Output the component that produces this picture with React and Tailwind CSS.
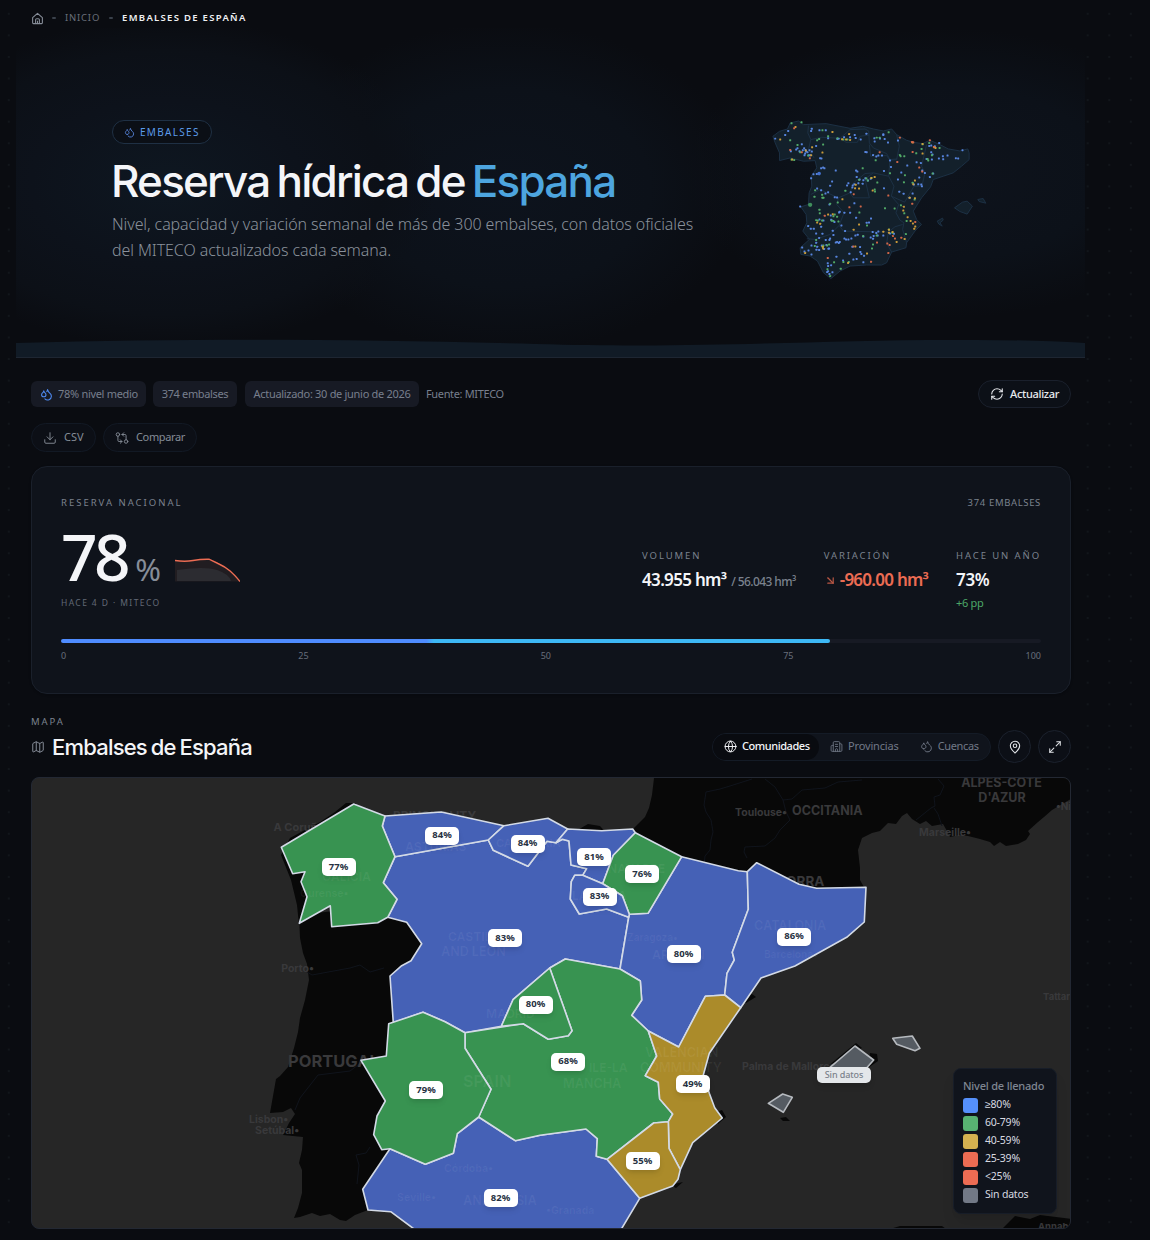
import { ArrowDownRight, Building2, Download, Droplets, GitCompareArrows, Globe, Map, MapPin, Maximize2, RefreshCw } from 'lucide-react';

const fills = { blue: '#4561b6', green: '#389351', yellow: '#ab8b2a' };

// Simplified outlines of the autonomous communities, in map canvas units
const regions = [
  { id: 'andalucia', tone: 'blue', points: '390,1148.7 425.3,1164.3 453.3,1153.3 457.3,1133.7 478.7,1117 515.3,1140.7 540,1135.3 586,1129 597.3,1138.7 596.3,1156.3 607,1159.3 639.7,1198.3 622,1228 614,1241 430,1241 412.3,1227.7 390.7,1211.7 368,1210 362.7,1189.3' },
  { id: 'castilla-leon', tone: 'blue', points: '395,856.7 488.3,840 493.3,850.3 528,866.3 547,841.3 556,842.7 562.3,839.3 569,841 571,865 586.7,868.7 582.7,875.3 574.7,875.3 571.3,881.7 570.3,899 579.3,914 606.7,909 628.7,917.3 620,969 565.3,959 549.7,968 513,999.7 501.3,1026.3 465,1032.7 445,1021.7 423,1012.3 393.3,1022.7 390,976 401.7,965.7 411,960.7 421.7,943.7 406.7,922.3 387.7,917.3 397,899.3 383.3,882.7' },
  { id: 'asturias', tone: 'blue', points: '385,816 441.3,812 504,825.7 488.3,840 395,856.7 382.3,826' },
  { id: 'cantabria', tone: 'blue', points: '504,825.7 548,818.3 567.7,829 556,842.7 547,841.3 528,866.3 493.3,850.3 488.3,840' },
  { id: 'euskadi', tone: 'blue', points: '567.7,829 601.7,830.7 632.7,829 635.3,832.7 613.3,855.3 602.7,883.7 582.7,875.3 586.7,868.7 571,865 569,841 562.3,839.3 556,842.7' },
  { id: 'aragon', tone: 'blue', points: '681.7,856.7 738.3,870.7 747.3,871.7 748.3,909.3 732.3,952.3 734.3,960 727,973.3 724.7,995 705.3,996.3 678.7,1047 648.3,1031 631.7,1015.3 641.7,1000 640.3,981 620,969 628.7,917.3 629.3,914.3 648,913.3' },
  { id: 'cataluna', tone: 'blue', points: '747.3,871.7 756.7,862.7 799,884.3 816.7,888.3 866,887.3 864.3,922 846.7,937.3 795,966 761,978 740.7,1007.7 724.7,995 727,973.3 734.3,960 732.3,952.3 748.3,909.3' },
  { id: 'galicia', tone: 'green', points: '353.7,804 385,816 382.3,826 395,856.7 383.3,882.7 397,899.3 387.7,917.3 377.7,922.7 331.7,926.7 330.3,905.7 299.3,923.3 307,896.7 301,881.7 305,871.7 292.7,873.7 281.3,847.3' },
  { id: 'navarra', tone: 'green', points: '635.3,832.7 681.7,856.7 648,913.3 629.3,914.3 622.3,895.7 602.7,883.7 613.3,855.3' },
  { id: 'rioja', tone: 'blue', points: '582.7,875.3 602.7,883.7 622.3,895.7 629.3,914.3 628.7,917.3 606.7,909 579.3,914 570.3,899 571.3,881.7 574.7,875.3' },
  { id: 'castilla-mancha', tone: 'green', points: '620,969 640.3,981 641.7,1000 631.7,1015.3 648.3,1031 656.7,1056 645.3,1075.7 658.3,1082.3 659.7,1099 672.7,1114 668.3,1121.7 653.7,1123 607,1159.3 596.3,1156.3 597.3,1138.7 586,1129 540,1135.3 515.3,1140.7 478.7,1117 491,1089.3 465,1048.3 465,1032.7 523.3,1023.7 548.3,1039.3 568.3,1035.7 572,1030.7 549.7,968 565.3,959' },
  { id: 'madrid', tone: 'green', points: '549.7,968 572,1030.7 568.3,1035.7 548.3,1039.3 523.3,1023.7 501.3,1026.3 513,999.7' },
  { id: 'extremadura', tone: 'green', points: '423,1012.3 445,1021.7 465,1032.7 465,1048.3 491,1089.3 478.7,1117 457.3,1133.7 453.3,1153.3 425.3,1164.3 390,1148.7 381.7,1149.7 373.7,1134.7 377,1116 385.3,1101 361,1060.3 386.3,1056 388.7,1023.7' },
  { id: 'valencia', tone: 'yellow', points: '705.3,996.3 724.7,995 740.7,1007.7 709.3,1053.3 703.3,1075 709.3,1093.3 714.7,1107.7 722.3,1118 692.7,1142.7 680.3,1169.7 669,1148.3 668.3,1121.7 672.7,1114 659.7,1099 658.3,1082.3 645.3,1075.7 656.7,1056 648.3,1031 678.7,1047' },
  { id: 'murcia', tone: 'yellow', points: '668.3,1121.7 669,1148.3 680.3,1169.7 678,1179.3 672.7,1186 639.7,1198.3 607,1159.3 653.7,1123' },
];

const islands = [
  '855,1046 873.7,1060 855,1081 830,1067.3',
  '892.7,1038.3 912.3,1036 920,1048.3 915,1050.7 896.7,1044.3',
  '782.7,1094 792.3,1097.3 783.3,1112.3 768.3,1103.3',
];

const badges = [
  [338.5, 867, '77%'], [442, 835.5, '84%'], [527.5, 843.5, '84%'], [594, 857, '81%'], [642, 874, '76%'],
  [599.5, 896.5, '83%'], [505, 938, '83%'], [683.5, 954, '80%'], [794, 936.5, '86%'], [535.5, 1004.5, '80%'],
  [568, 1061.5, '68%'], [426, 1090, '79%'], [692.5, 1084, '49%'], [642.5, 1161, '55%'], [500.5, 1198, '82%'],
];

// [x, y, text, size, anchor]
const places = [
  [329, 831, 'A Coruña•', 11, 'end'], [314, 972, 'Porto•', 10.5, 'end'], [288, 1067, 'PORTUGAL', 16.5, 'start'],
  [249, 1123, 'Lisbon•', 10.5, 'start'], [255, 1134, 'Setúbal•', 10.5, 'start'], [735, 816, 'Toulouse•', 10.5, 'start'],
  [792, 815, 'OCCITANIA', 12.5, 'start'], [1001.5, 787, 'ALPES-CÔTE', 12.5, 'middle'], [1002, 802, "D'AZUR", 12.5, 'middle'],
  [919, 836, 'Marseille•', 10.5, 'start'], [1056, 810, '•Nice', 10, 'start'], [742, 1070, 'Palma de Mallorca', 10.5, 'start'],
  [1043, 1000, 'Tattaria', 9.5, 'start'], [1038, 1230, 'Annaba', 9.5, 'start'], [756, 886, 'ANDORRA', 13.5, 'start'],
  [393, 820, 'PRINCIPALITY', 12, 'start'],
];

const inlandPlaces = [
  [405, 851, 'ASTURIAS', 12], [448, 941, 'CASTILE', 12], [441, 956, 'AND LEON', 12.5], [486, 1018, 'MADRID', 12],
  [463, 1087, 'SPAIN', 16], [589, 1072, 'ILE-LA', 12], [563, 1088, 'MANCHA', 12.5], [645, 1057, 'VALENCIAN', 12.5],
  [640, 1072, 'COMMUNITY', 12.5], [754, 930, 'CATALONIA', 12.5], [463, 1205, 'ANDALUSIA', 12.5], [444, 1172, 'Córdoba•', 10.5],
  [397, 1201, 'Seville•', 10.5], [546, 1214, '•Granada', 10.5], [627, 941, 'Zaragoza•', 10], [652, 959, 'ARAGON', 12],
  [322, 881, 'GALICIA', 12], [300, 897, 'Ourense•', 10.5], [764, 958, 'Barcelona•', 10], [572, 900, 'LA RIOJA', 12],
  [608, 873, 'NAVARRE', 12], [496, 847, 'CANTABRIA', 11],
];

const legend = [
  ['bg-[#5590fb]', '≥80%'],
  ['bg-[#58b272]', '60-79%'],
  ['bg-[#d4b150]', '40-59%'],
  ['bg-[#ec6c53]', '25-39%'],
  ['bg-[#ec6c53]', '<25%'],
  ['bg-[#727986]', 'Sin datos'],
];

const dotGroups = {
  '#5b8ae8': '105,147 135,136 144,124 152,185 168,180 172,176 178,185 185,164 188,182 192,176 196,181 198,186 195,192 202,188 208,182 215,117 213,124 238,122 193,197 206,197 215,186 210,197 228,169 257,122 264,146 292,148 296,147 312,143 330,143 344,136 347,145 362,150 379,132 376,187 380,188 404,156 403,146 420,147 430,136 434,148 430,134 444,159 474,153 409,201 399,196 415,198 426,198 432,244 453,232 450,213 474,270 484,249 502,228 530,218 543,220 547,243 555,250 538,264 535,284 544,285 546,290 570,262 580,252 560,208 574,188 578,195 576,210 568,169 574,168 585,170 598,160 597,207 609,200 610,209 623,198 648,206 655,207 668,182 240,206 244,207 253,236 243,236 249,234 287,243 220,254 213,266 348,243 352,246 276,276 270,289 321,288 338,288 337,294 359,270 355,281 343,284 376,266 370,272 350,262 384,273 325,281 432,296 392,268 368,283 478,307 491,313 332,308 231,297 243,302 256,312 264,308 284,323 291,324 180,351 299,367 297,369 313,370 268,345 343,341 330,370 348,385 393,387 380,400 387,399 273,391 283,398 272,378 238,390 204,410 212,418 228,432 221,418 243,412 247,433 250,393 278,424 315,425 304,408 280,437 270,447 237,446 257,452 268,452 318,450 325,450 334,447 313,447 346,438 296,461 287,459 291,458 299,458 245,468 228,460 231,472 214,468 186,474 205,483 214,495 229,481 267,477 252,479 193,486 237,482 259,467 265,478 328,493 340,510 350,509 337,472 360,473 361,488 364,494 372,499 370,519 353,436 370,441 398,428 409,431 413,438 401,440 399,448 392,444 415,426 430,438 462,433 289,502 309,513 263,522 264,530 273,528 264,546 268,554 277,549 261,548 450,432 522,285 518,312 509,325 230,253 236,252',
  '#54b06a': '154,101 184,98 150,152 172,166 180,188 204,198 231,152 249,165 247,122 264,140 310,150 322,150 292,146 410,144 446,128 419,144 480,196 482,200 493,200 407,212 368,236 495,257 492,278 518,280 450,251 412,279 404,300 405,306 379,267 383,273 394,265 357,271 316,304 225,302 223,322 246,316 247,325 270,343 210,346 238,361 239,371 250,325 293,339 284,375 280,380 291,382 295,396 233,393 275,394 280,395 228,392 246,393 435,356 464,357 483,347 493,371 524,330 500,395 381,408 358,369 447,420 457,430 498,434 369,440 410,438 228,452 224,470 248,472 261,468 267,465 250,468 399,465 396,477 302,538 310,518 270,560 262,540 282,519 326,518 545,178 568,160 563,208 576,197 565,213 599,175 578,252 529,191 548,164 154,210 162,211 237,148',
  '#d3a13a': '166,112 120,150 277,127 306,149 327,133 318,150 330,151 213,197 216,173 197,183 156,210 247,189 548,163 583,173 587,175 548,192 518,159 525,273 520,284 509,325 492,352 490,363 503,383 512,395 519,402 526,411 523,418 525,326 470,458 447,430 458,428 447,421 494,449 345,296 357,297 307,329 347,286 264,375 240,403 231,399 278,374 357,405 248,472 249,477 195,491 324,521 346,471 381,492 404,262 394,265 341,421 398,303 430,427',
  '#d9694a': '150,181 162,116 185,188 419,188 480,144 520,158 516,157 518,187 538,234 570,152 582,172 472,217 445,318 362,351 328,353 341,314 254,379 517,343 459,440 465,447 442,462 449,467 484,445 445,491 393,517 411,459 263,506 209,206 547,246 526,398 340,471',
};

const heroDots = Object.entries(dotGroups).flatMap(([color, list]) =>
  list.split(' ').map((p) => ({ color, x: Number(p.split(',')[0]), y: Number(p.split(',')[1]) }))
);

const heroBorders = [
  'M205,108 L203,130 L212,150 L205,180 L222,205',
  'M212,150 L245,143 L300,146 L330,120 L375,118 L386,124 L388,160 L400,175 L440,192 L450,210 L472,208',
  'M300,146 L318,158 L352,158 L360,140 L388,136',
  'M470,135 L478,170 L470,210 L450,212 L440,198 L392,200 L388,165',
  'M450,212 L446,260 L400,250 L375,252 L340,280 L330,310 L295,325 L240,300 L212,315',
  'M400,250 L375,268 L388,325 L340,325 L330,310',
  'M446,260 L462,290 L454,320 L494,338 L522,290 L546,290 L555,250 L545,230 L560,165',
  'M454,320 L476,345 L468,370 L480,392 L492,400 L488,420 L500,460',
  'M488,405 L465,412 L445,428 L310,425 L297,408 L312,370 L290,345 L295,325',
  'M297,408 L270,435 L225,450 L200,448',
  'M445,428 L440,462 L455,488',
];

function HomeIcon() {
  return (
    <svg viewBox="0 0 24 24" className="size-[13px] text-[#868d98]" fill="none" stroke="currentColor" strokeWidth="2" strokeLinejoin="round">
      <path d="M3 10.5 12 2.5l9 8V20a1.5 1.5 0 0 1-1.5 1.5h-15A1.5 1.5 0 0 1 3 20z" />
      <path d="M8.5 21v-6.5a2 2 0 0 1 2-2h3a2 2 0 0 1 2 2V21M12 16v5" />
    </svg>
  );
}

function HeroMap() {
  return (
    <svg viewBox="90 85 660 490" className="h-[163px] w-[220px]">
      <g fill="#13202b" stroke="#1c3044" strokeWidth="3" strokeLinejoin="round">
        <path d="M98,140 118,125 142,118 150,100 175,94 190,105 258,102 330,116 368,110 400,118 430,124 455,118 470,135 500,152 520,158 548,162 570,152 600,165 625,178 660,184 684,178 688,190 688,210 665,230 640,250 610,260 580,270 572,292 545,325 520,365 530,390 545,405 525,425 500,460 498,475 455,488 440,520 425,527 380,527 330,530 300,545 272,568 250,550 232,515 210,500 182,495 180,475 208,450 188,425 200,400 198,375 182,352 205,345 207,310 215,290 213,260 230,235 225,213 190,215 150,205 118,213 118,190 105,160Z" />
        <path d="M644,355 668,338 682,335 698,350 682,374 660,366Z" />
        <path d="M714,330 730,327 738,341 718,336Z" />
        <path d="M592,395 608,386 610,392 600,400 607,410 597,404Z" />
        {heroBorders.map((d) => <path key={d} d={d} fill="none" />)}
      </g>
      {heroDots.map((dot, i) => (
        <rect key={i} x={dot.x - 3} y={dot.y - 3} width="6" height="6" rx="1.5" fill={dot.color} opacity="0.95" />
      ))}
      <circle cx="210" cy="346" r="6.5" fill="#3f8f5c" />
      <circle cx="237" cy="252" r="5.5" fill="#4471cf" />
    </svg>
  );
}

function Stat({ label, children }) {
  return (
    <div className="flex flex-col">
      <span className="text-[9.5px] leading-[14px] tracking-[1.9px] text-[#7b828e]">{label}</span>
      <div className="mt-[7px] flex h-[20px] items-baseline whitespace-nowrap text-[17px] leading-[20px] font-semibold">{children}</div>
    </div>
  );
}

function Hero() {
  return (
    <section className="relative h-[330px] overflow-hidden border-b border-[#1e2632] bg-[radial-gradient(ellipse_270px_165px_at_150px_155px,#0e1721_0%,#0d121b_50%,#0c1017_80%,transparent_100%),radial-gradient(ellipse_240px_165px_at_490px_160px,#0d131d_0%,#0c1119_60%,transparent_100%),radial-gradient(ellipse_260px_145px_at_930px_145px,#0e131c_0%,#0c1119_60%,transparent_100%)]">
      <svg viewBox="0 0 1069 18" preserveAspectRatio="none" className="absolute bottom-0 left-0 h-[18px] w-full">
        <path d="M0 4C180 -1 340 0 520 5S800 0 960 1Q1020 1 1069 4V18H0Z" fill="#111b26" />
      </svg>
      <div className="flex items-start justify-between pt-[92px] pl-24">
        <div className="w-[620px]">
          <span className="flex h-6 w-[100px] items-center gap-[5px] rounded-full border border-[#1f3044] bg-[#0b0f16] pl-[11px] text-[10px] tracking-[1.3px] text-[#5c9bea]">
            <Droplets size={11} className="text-[#5582d8]" /> EMBALSES
          </span>
          <h1 className="-ml-px mt-[12px] font-[Inter] text-[44px] leading-[50px] font-medium tracking-[-1.8px] [word-spacing:-2.8px] whitespace-nowrap text-[#f4f5f8]">
            Reserva hídrica de <span className="text-[#4da5df]">España</span>
          </h1>
          <p className="mt-[5px] text-[16px] leading-[26px] font-light tracking-[-0.09px] whitespace-nowrap text-[#8a919b]">
            Nivel, capacidad y variación semanal de más de 300 embalses, con datos oficiales
            <br />
            del MITECO actualizados cada semana.
          </p>
        </div>
        <div className="mr-[95px] -mt-[2px]">
          <HeroMap />
        </div>
      </div>
    </section>
  );
}

function Toolbar() {
  const chip = 'flex h-[26px] items-center rounded-md bg-[#171a24] text-[#777f8d]';
  const pill = 'flex h-[29px] items-center rounded-full border border-[#121924] bg-[#0c0f16] text-[#858c97]';
  return (
    <div className="text-[11px] whitespace-nowrap">
      <div className="flex h-[28px] items-center">
        <span className={`${chip} w-[115px] gap-[5px] pl-[9px] tracking-[-0.3px]`}>
          <Droplets size={13} className="text-[#4f8cf5]" /> 78% nivel medio
        </span>
        <span className={`${chip} ml-[7px] w-[84px] justify-center tracking-[-0.35px]`}>374 embalses</span>
        <span className={`${chip} ml-[8px] w-[174px] justify-center tracking-[-0.3px]`}>Actualizado: 30 de junio de 2026</span>
        <span className="ml-[7px] tracking-[-0.35px] text-[#777f8d]">Fuente: MITECO</span>
        <button className="ml-auto flex h-[28px] w-[93px] items-center gap-[6px] rounded-full border border-[#1a202c] bg-[#0c1017] pl-[11px] font-medium tracking-[-0.3px] text-[#e8eaee]">
          <RefreshCw size={14} strokeWidth={1.8} /> Actualizar
        </button>
      </div>
      <div className="mt-[15px] flex gap-[7px]">
        <button className={`${pill} w-[65px] gap-[7px] pl-[11px]`}>
          <Download size={14} strokeWidth={1.6} /> CSV
        </button>
        <button className={`${pill} w-[94px] gap-[7px] pl-[11px] tracking-[-0.35px]`}>
          <GitCompareArrows size={14} strokeWidth={1.6} /> Comparar
        </button>
      </div>
    </div>
  );
}

function ReserveCard() {
  return (
    <section className="mt-[14px] h-[228px] rounded-2xl border border-[#1a202b] bg-[#0f131b] px-[29px] pt-[29px] shadow-sm">
      <div className="flex justify-between text-[9.5px] leading-[14px] text-[#7b828e]">
        <span className="tracking-[2px]">RESERVA NACIONAL</span>
        <span className="tracking-[0.65px]">374 EMBALSES</span>
      </div>
      <div className="mt-[18px] flex justify-between">
        <div>
          <div className="flex h-[58px] items-end">
            <span className="text-[64px] leading-[58px] font-medium tracking-[-3.5px] text-[#f4f5f8]">78</span>
            <span className="ml-[8px] text-[31px] leading-[33px] text-[#868d98]">%</span>
            <svg viewBox="0 0 65 24" className="mb-[4px] ml-[14px] h-[24px] w-[65px]">
              <path d="M0 2.5Q10 4 18 2.5T34 1.2L43 5.5C53 10 58 15 65 23.5H0Z" fill="#211d21" />
              <path d="M2 23V12Q30 8 42 12T56 23Z" fill="#2c2c31" />
              <path d="M0 2.5Q10 4 18 2.5T34 1.2L43 5.5C53 10 58 15 65 23.5" fill="none" stroke="#ec6c53" strokeWidth="1.4" />
            </svg>
          </div>
          <p className="mt-[10px] text-[8.5px] leading-[14px] tracking-[1.4px] text-[#626976]">HACE 4 D · MITECO</p>
        </div>
        <div className="flex gap-[28px] pt-[21px] text-[#f4f5f8]">
          <Stat label="VOLUMEN">
            <span className="tracking-[-0.7px]">43.955 hm³</span>
            <span className="ml-[5px] text-[12px] font-medium tracking-[-0.6px] text-[#7b828e]">/ 56.043 hm³</span>
          </Stat>
          <Stat label="VARIACIÓN">
            <ArrowDownRight size={13} strokeWidth={2.2} className="mr-[3px] self-center text-[#b95744]" />
            <span className="tracking-[-0.75px] text-[#ec6c53]">-960.00 hm³</span>
          </Stat>
          <div className="h-[61px]">
            <Stat label="HACE UN AÑO"><span className="tracking-[-0.4px]">73%</span></Stat>
            <p className="mt-[6px] text-[11px] leading-[14px] tracking-[-0.3px] text-[#4ca868]">+6 pp</p>
          </div>
        </div>
      </div>
      <div className="mt-[29px] h-1 rounded-full bg-[#171a24]">
        <div className="h-1 w-[78.5%] rounded-full bg-[linear-gradient(90deg,#4f8cff_47.5%,#3db8f5_48.5%)]" />
      </div>
      <div className="mt-[6px] flex justify-between text-[9px] leading-[14px] text-[#686f7b]">
        {[0, 25, 50, 75, 100].map((tick) => <span key={tick}>{tick}</span>)}
      </div>
    </section>
  );
}

function MapHeader() {
  const round = 'flex size-[33px] items-center justify-center rounded-full border border-[#1b212d] bg-[#0c0f16] text-[#e3e6ea]';
  return (
    <div className="mt-[21px] flex h-[48px] justify-between">
      <div>
        <p className="text-[9.5px] leading-[14px] tracking-[1.9px] text-[#7b828e]">MAPA</p>
        <h2 className="mt-[3px] flex items-center gap-[7px] font-[Inter] text-[22px] leading-[30px] font-medium tracking-[-0.8px] [word-spacing:-1.2px] whitespace-nowrap text-[#f4f5f8]">
          <Map size={14} strokeWidth={1.7} className="text-[#868d98]" /> Embalses de España
        </h2>
      </div>
      <div className="mt-[15px] flex h-[33px] items-center gap-[7px] text-[11px] tracking-[-0.15px]">
        <div className="flex h-[28px] w-[279px] items-center rounded-full border border-[#141b26] bg-[#10141c] text-[#717987]">
          <span className="flex h-[26px] w-[106px] items-center gap-[5px] rounded-full bg-[#090b10] pl-[11px] font-medium tracking-[-0.45px] text-[#f4f5f8]">
            <Globe size={13} strokeWidth={1.8} /> Comunidades
          </span>
          <span className="ml-[11px] flex items-center gap-[5px]"><Building2 size={13} strokeWidth={1.6} /> Provincias</span>
          <span className="ml-[21px] flex items-center gap-[5px] tracking-[-0.35px]"><Droplets size={13} strokeWidth={1.7} /> Cuencas</span>
        </div>
        <button className={round}><MapPin size={14} strokeWidth={1.8} /></button>
        <button className={round}><Maximize2 size={14} strokeWidth={1.8} /></button>
      </div>
    </div>
  );
}

function ReservoirMap() {
  return (
    <section className="relative mt-[14px] h-[452px] overflow-hidden rounded-lg border border-[#232833] bg-[#262626]">
      <svg viewBox="32 778 1038 450" className="block h-full w-full">
        <g fill="#080808">
          <path d="M299 915 300 938 303 953 307 964 309 980 305 1000 300 1018 298 1032 294 1048 288 1067 280 1076 276 1079 273 1096 270 1113 283 1112 291 1108 295 1114 289 1123 283 1135 303 1137 302 1150 299 1163 302 1170 302 1193 298 1208 294 1218 300 1217 312 1213 320 1216 330 1214 340 1220 346 1221 355 1215 368 1210 400 1180 480 1080 430 900Z" />
          <path d="M654 778 652 795 649 808 645 817 638 824 633 829 680 870 760 900 865 889 860 880 860 868 858 850 862 838 872 833 880 831 888 823 896 824 902 816 907 813 912 819 920 824 926 821 932 826 943 824 947 831 950 837 960 835 968 836 980 839 990 842 994 846 1000 842 1006 846 1018 844 1026 840 1030 834 1028 831 1038 822 1044 817 1052 810 1071 799V778Z" />
          <path d="M281 855 290 838 320 822 335 812 346 803 356 803 350 840 310 890 299 925 297 905 291 880 283 860ZM574 832 588 824 600 826 608 835Z" />
          <path d="M738 1000 752 994 756 997 746 1003ZM716 1112 722 1110 726 1117 718 1124ZM670 1185 683 1182 676 1188ZM780 1118 786 1117 790 1121 783 1121ZM870 1053 877 1054 878 1061 868 1068Z" />
          <path d="M890 1229 900 1226 942 1226 946 1229ZM1002 1229 1015 1216 1030 1219 1040 1215 1071 1219V1229Z" />
          <path d="M828 1066 856 1043 862 1048Z" />
        </g>
        <g fill="none" stroke="#10141c" strokeWidth="1">
          <path d="M704 865 705 856 710 850 711 840 713 832 711 820 706 812 704 805 706 792 720 789 730 786 752 779M765 779 775 787 783 800 786 812 790 820 780 830 775 838 765 846 745 847 744 852 747 858M783 800 792 799 802 790 825 788 838 782 862 780M938 779 944 786 940 795 934 797 935 806 931 808 916 820M934 808 938 814 942 826" />
          <path d="M304 970 312 975 350 968 360 965 370 972 384 968M295 1110 300 1098 318 1075 350 1071 362 1062M370 1147 366 1153 356 1155 359 1165 357 1184" />
        </g>
        <g fill="#39393b" className="font-[Inter] font-bold">
          {places.map(([x, y, text, size, anchor]) => (
            <text key={text} x={x} y={y} fontSize={size} textAnchor={anchor}>{text}</text>
          ))}
        </g>
        <g stroke="#d3dae6" strokeWidth="1.6" strokeLinejoin="round">
          {regions.map((region) => (
            <polygon key={region.id} points={region.points} fill={fills[region.tone]} />
          ))}
          {islands.map((points) => <polygon key={points} points={points} fill="#555b62" stroke="#b6babf" />)}
        </g>
        <g fill="#ffffff" fillOpacity="0.06" className="font-[Inter] font-bold">
          {inlandPlaces.map(([x, y, text, size]) => <text key={text} x={x} y={y} fontSize={size}>{text}</text>)}
        </g>
      </svg>
      {badges.map(([x, y, label]) => (
        <span
          key={`${x}-${y}`}
          className="absolute flex h-[18px] w-[34px] -translate-x-1/2 -translate-y-1/2 items-center justify-center rounded-[5px] bg-white text-[9.5px] font-bold text-[#273142] shadow-md"
          style={{ left: x - 32, top: y - 778 }}
        >
          {label}
        </span>
      ))}
      <span className="absolute top-[289px] left-[785px] flex h-[16px] w-[54px] items-center justify-center rounded-[5px] bg-[#e4e7ea] text-[9px] font-medium tracking-[-0.1px] whitespace-nowrap text-[#7b828c] shadow-md">
        Sin datos
      </span>
      <div className="absolute right-[13px] bottom-[14px] h-[146px] w-[104px] rounded-lg border border-[#171d28] bg-[#10141c] px-[9px] pt-[9px] shadow-lg">
        <p className="text-[11px] leading-[15px] font-medium tracking-[-0.2px] whitespace-nowrap text-[#7f8692]">Nivel de llenado</p>
        <ul className="mt-[3px] text-[10.5px] tracking-[-0.2px] text-[#d8dbe1]">
          {legend.map(([color, label]) => (
            <li key={label} className="flex h-[18px] items-center gap-[7px]">
              <span className={`size-[15px] rounded-[3px] ${color}`} /> {label}
            </li>
          ))}
        </ul>
      </div>
    </section>
  );
}

export default function App() {
  return (
    <div className="h-[1240px] w-[1150px] overflow-hidden bg-[#0a0c11] bg-[radial-gradient(circle,#12161b_1px,transparent_1.5px)] bg-[length:21.58px_21.58px] bg-[position:-2px_3px] font-['Noto_Sans',sans-serif] antialiased">
      <div className="ml-4 h-full w-[1069px] bg-[#0a0c11]">
        <nav className="flex h-7 items-center pt-[8px] pl-[15px] text-[9.5px] tracking-[0.8px]">
          <HomeIcon />
          <span className="ml-[8px] h-[2px] w-1 rounded-full bg-[#3a414b]" />
          <span className="ml-[9px] text-[#686e79]">INICIO</span>
          <span className="ml-[9px] h-[2px] w-1 rounded-full bg-[#3a414b]" />
          <span className="ml-[9px] font-semibold tracking-[1.3px] text-[#f0f1f4]">EMBALSES DE ESPAÑA</span>
        </nav>
        <Hero />
        <main className="pt-[22px] pr-[14px] pl-[15px]">
          <Toolbar />
          <ReserveCard />
          <MapHeader />
          <ReservoirMap />
        </main>
      </div>
    </div>
  );
}
